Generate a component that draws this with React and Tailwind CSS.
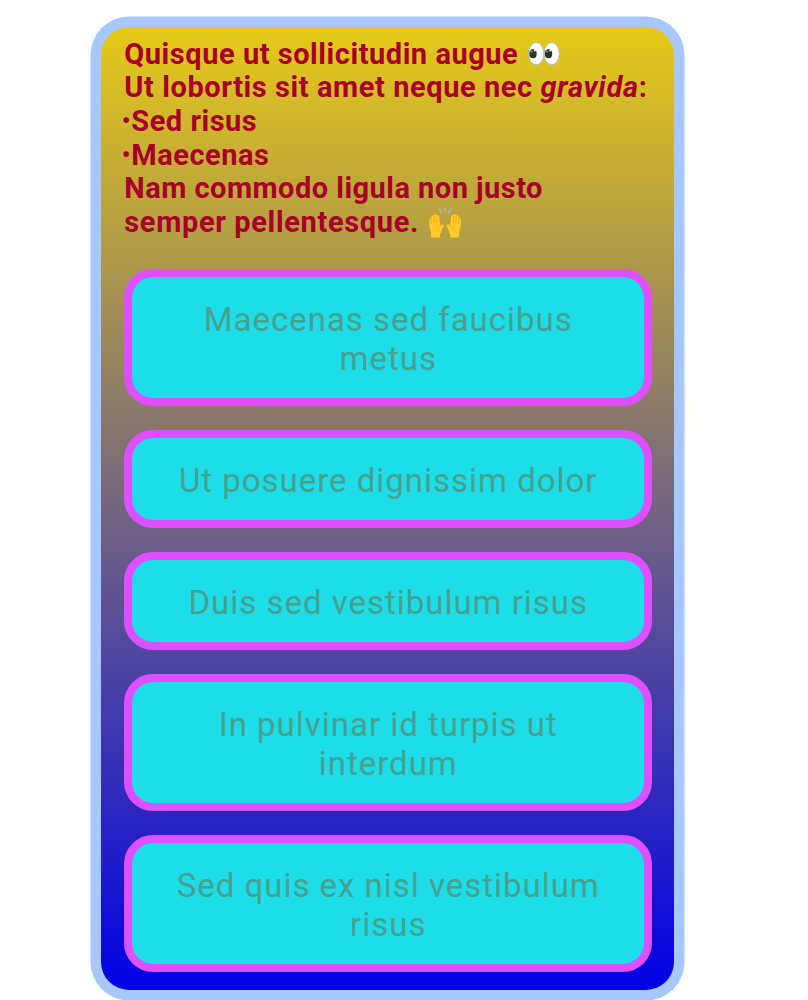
import React from "react";

function Eyes() {
  return (
    <svg className="ml-[0.6px] inline-block h-[26px] w-[34px] align-[-3px]" viewBox="0 0 34 26">
      <g fill="#fafafa" stroke="#b0bec5" strokeWidth="1">
        <ellipse cx="9.2" cy="12.7" rx="7.6" ry="11.2" />
        <ellipse cx="24.7" cy="12.7" rx="7.6" ry="11.2" />
      </g>
      <ellipse cx="6" cy="12.7" rx="3.7" ry="4.5" fill="#303030" />
      <ellipse cx="21.5" cy="12.7" rx="3.7" ry="4.5" fill="#303030" />
      <ellipse cx="4.2" cy="10.5" rx="1.7" ry="1" fill="#8b8b8b" transform="rotate(30 4.2 10.5)" />
      <ellipse cx="19.7" cy="10.5" rx="1.7" ry="1" fill="#8b8b8b" transform="rotate(30 19.7 10.5)" />
      <circle cx="7.8" cy="9.6" r="1" fill="#fafafa" />
      <circle cx="23.3" cy="9.6" r="1" fill="#fafafa" />
    </svg>
  );
}

function Hand() {
  return (
    <>
      <path
        d="M3 31.5 L3.1 25.5 C1.2 22 1 17.5 1.4 13.6 Q1.8 12 3 12.4 L3.4 10.4 Q4.4 8.6 5.8 9.6 Q7.2 7.4 8.8 9 Q10.8 8.6 11.2 11 L12.2 20 Q13 18.4 14.8 18.6 Q16.6 18.8 15.6 20.6 Q14.2 22.2 13.6 24.6 Q13 27 12 28 L12.2 31.5Z"
        fill="#ffca28"
      />
      <path d="M3.4 12.5 L3.7 17.5 M6 10 L6.2 17 M8.7 9.8 L8.8 17" stroke="#f5a400" strokeWidth="0.8" fill="none" />
      <path d="M11.9 19.8 Q9 20.8 8.8 23.6" stroke="#f9b000" strokeWidth="0.7" fill="none" />
    </>
  );
}

function RaisedHands() {
  return (
    <svg className="ml-[0.6px] inline-block h-[32px] w-[34px] align-[-6.5px]" viewBox="0 0 34 32">
      <Hand />
      <g transform="translate(34.2 0) scale(-1 1)">
        <Hand />
      </g>
      <path d="M17.1 1 V6 M11 2.8 L13.8 6.8 M23.2 2.8 L20.4 6.8" stroke="#b0bec5" strokeWidth="1.2" strokeLinecap="round" />
    </svg>
  );
}

function Bullet() {
  return <span className="-ml-[2.6px] align-[2px] text-[24px] leading-none tracking-[1px]">•</span>;
}

const options = [
  ["Maecenas sed faucibus", "metus"],
  ["Ut posuere dignissim dolor"],
  ["Duis sed vestibulum risus"],
  ["In pulvinar id turpis ut", "interdum"],
  ["Sed quis ex nisl vestibulum", "risus"],
];

function Option({ lines }) {
  return (
    <button className="block w-full rounded-[29px] border-8 border-[#e04fff] bg-[#1ddde8] pt-[23.35px] pb-[19.35px] pl-px text-center text-[33px] leading-[39px] tracking-[0.98px] text-[#48a18f]">
      {lines.map((line) => (
        <span key={line} className="block whitespace-nowrap">
          {line}
        </span>
      ))}
    </button>
  );
}

export default function App() {
  return (
    <main className="h-[1000px] w-[808px] overflow-hidden bg-white pt-[17px] pl-[91px] font-['Roboto',sans-serif]">
      <section className="h-[983px] w-[593px] rounded-[38px] bg-[#a7c8ff] p-[10px] shadow-[0_0_0_0.5px_#a7c8ff]">
        <div className="h-[963px] rounded-[28px] bg-[linear-gradient(to_bottom,#e6ca18,#0000e6)] pr-[22px] pl-[22.5px] pt-[10px]">
          <div className="h-[232px] whitespace-nowrap pt-[0.5px] pl-[0.8px] text-[29px] leading-[33.7px] font-bold tracking-[0.5px] text-[#a80029]">
            <p className="h-[33.7px] tracking-[0.54px]">Quisque ut sollicitudin augue <Eyes /></p>
            <p className="h-[33.7px] tracking-[0.58px]">Ut lobortis sit amet neque nec <em className="tracking-[0.7px]">gravida</em>:</p>
            <p className="h-[33.7px]"><Bullet />Sed risus</p>
            <p className="h-[33.7px]"><Bullet />Maecenas</p>
            <p className="h-[33.7px] tracking-[0.47px]">Nam commodo ligula non justo</p>
            <p className="h-[33.7px] tracking-[0.65px]">semper pellentesque. <RaisedHands /></p>
          </div>
          <div className="flex flex-col gap-[24.3px]">
            {options.map((lines) => (
              <Option key={lines[0]} lines={lines} />
            ))}
          </div>
        </div>
      </section>
    </main>
  );
}
